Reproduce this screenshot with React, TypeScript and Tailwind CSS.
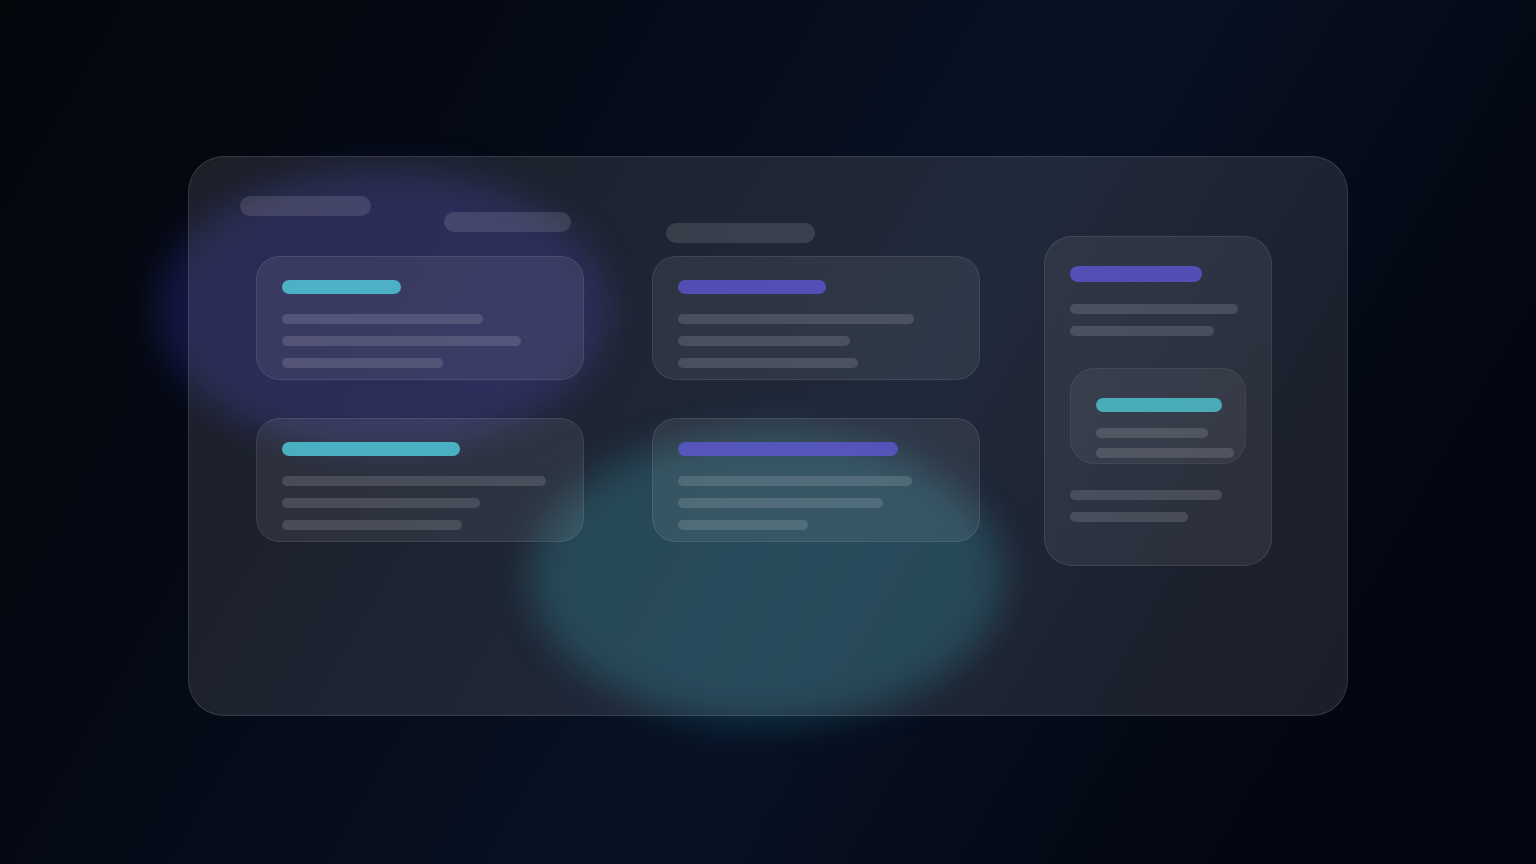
import clsx from "clsx";

type CardData = {
    id: string;
    accent: "teal" | "violet";
    title: string;
    lines: string[];
};

// Bar widths for each placeholder card
const cards: CardData[] = [
    { id: "a", accent: "teal", title: "w-[119px]", lines: ["w-[201px]", "w-[239px]", "w-[161px]"] },
    { id: "b", accent: "violet", title: "w-[148px]", lines: ["w-[236px]", "w-[172px]", "w-[180px]"] },
    { id: "c", accent: "teal", title: "w-[178px]", lines: ["w-[264px]", "w-[198px]", "w-[180px]"] },
    { id: "d", accent: "violet", title: "w-[220px]", lines: ["w-[234px]", "w-[205px]", "w-[130px]"] },
];

const accents = {
    teal: "bg-[#51d0de]/80",
    violet: "bg-[#645ae6]/70",
};

function Bar({ className }: { className: string }) {
    return <div className={clsx("max-w-full rounded-full", className)} />;
}

function Line({ width }: { width: string }) {
    return <Bar className={clsx("h-2.5 bg-[#faf8ff]/14", width)} />;
}

function Card({ card }: { card: CardData }) {
    return (
        <article className="rounded-3xl border border-white/9 bg-[#fafaff]/7 px-[25px] pt-[23px] pb-[11px]">
            <Bar className={clsx("h-3.5", card.title, accents[card.accent])} />
            <div className="mt-5 flex flex-col gap-3">
                {card.lines.map((width, i) => (
                    <Line key={i} width={width} />
                ))}
            </div>
        </article>
    );
}

export default function App() {
    return (
        <main className="flex min-h-screen items-center justify-center overflow-hidden bg-[linear-gradient(120deg,#04070c_0%,#040914_25%,#081225_56%,#040916_76%,#030610_88%,#020510_100%)] pt-2">
            <div className="relative w-full max-w-[1160px]">
                {/* Glow behind the glass */}
                <div className="absolute top-3.5 -left-8 h-[280px] w-[452px] rounded-[50%] bg-[#4f46e5]/23 blur-[18px]" />
                <div className="absolute top-[276px] left-[342px] h-[290px] w-[474px] rounded-[50%] bg-[#35d0da]/20 blur-[18px]" />

                {/* Glass panel */}
                <section className="relative flex min-h-[560px] items-start gap-16 rounded-[36px] border border-white/12 bg-[#fafcff]/10 pt-[39px] pr-[75px] pb-10 pl-[51px]">
                    <div className="min-w-0 flex-1">
                        <header className="flex h-15 items-start">
                            <Bar className="h-5 w-[131px] bg-white/12" />
                            <Bar className="mt-4 ml-[73px] h-5 w-[127px] bg-white/12" />
                            <Bar className="mt-[27px] ml-[95px] h-5 w-[149px] bg-white/12" />
                        </header>

                        <div className="grid grid-cols-2 gap-x-17 gap-y-[38px] pl-4">
                            {cards.map((card) => (
                                <Card key={card.id} card={card} />
                            ))}
                        </div>
                    </div>

                    {/* Side column */}
                    <aside className="mt-10 w-[228px] shrink-0 rounded-[28px] border border-white/9 bg-[#fafaff]/7 px-[25px] pt-[29px] pb-[43px]">
                        <Bar className="h-4 w-[132px] bg-[#645ae6]/70" />
                        <div className="mt-[22px] flex flex-col gap-3">
                            <Line width="w-[168px]" />
                            <Line width="w-[144px]" />
                        </div>

                        <div className="mt-8 rounded-3xl border border-white/6 bg-white/5 pt-[29px] pr-[11px] pb-[5px] pl-[25px]">
                            <Bar className="h-3.5 w-[126px] bg-[#51d0de]/75" />
                            <div className="mt-4 flex flex-col gap-2.5">
                                <Line width="w-[112px]" />
                                <Line width="w-[138px]" />
                            </div>
                        </div>

                        <div className="mt-[26px] flex flex-col gap-3">
                            <Line width="w-[152px]" />
                            <Line width="w-[118px]" />
                        </div>
                    </aside>
                </section>
            </div>
        </main>
    );
}
